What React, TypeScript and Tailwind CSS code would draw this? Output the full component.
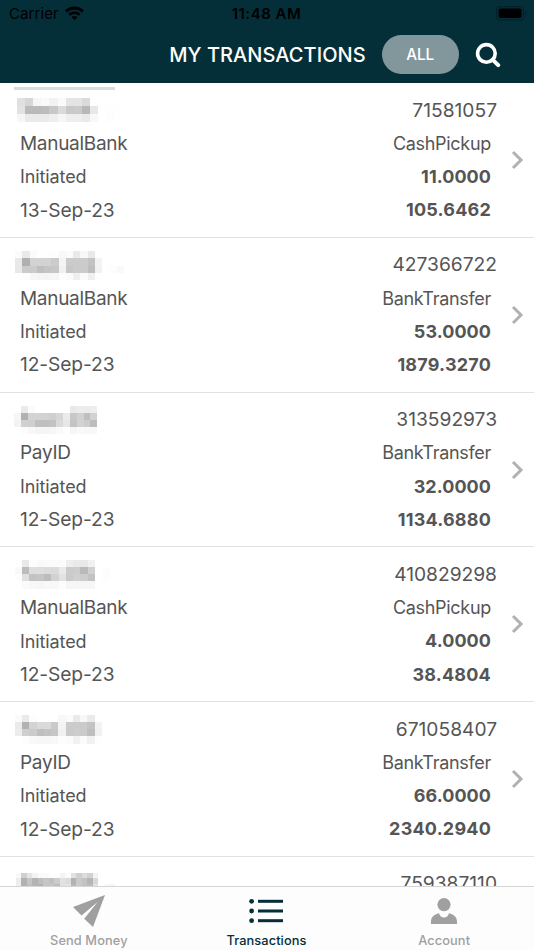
import { useState } from 'react';

interface Transaction {
  id: string;
  method?: string;
  payout?: string;
  status?: string;
  date?: string;
  amount?: string;
  received?: string;
  mask: Mask;
}

interface Mask {
  x: number;
  y: number;
  cell: number;
  rows: string[];
}

// Each pair of hex digits is the grey level of one mosaic cell
const transactions: Transaction[] = [
  {
    id: '71581057',
    method: 'ManualBank',
    payout: 'CashPickup',
    status: 'Initiated',
    date: '13-Sep-23',
    amount: '11.0000',
    received: '105.6462',
    mask: {
      x: 17,
      y: 15,
      cell: 8.1,
      rows: [
        'e0d6f6faf2fae4e4dafeffffff',
        'e2bababcc8dac8cab8e8fffefe',
        'f6eaeaeaeef6eeeeeaf8fffdff',
      ],
    },
  },
  {
    id: '427366722',
    method: 'ManualBank',
    payout: 'BankTransfer',
    status: 'Initiated',
    date: '12-Sep-23',
    amount: '53.0000',
    received: '1879.3270',
    mask: {
      x: 15,
      y: 13,
      cell: 7.25,
      rows: [
        'fbe9fbfffefef8fbe9f8e9feff',
        'e9b0d3d3d3cbf4cbcbcbc3f3ff',
        'e9cbcbbfc4c6f1c6cbcbbef1fffdf9',
        'fefdf7f5f5f6fdfbeffbeffeff',
      ],
    },
  },
  {
    id: '313592973',
    method: 'PayID',
    payout: 'BankTransfer',
    status: 'Initiated',
    date: '12-Sep-23',
    amount: '32.0000',
    received: '1134.6880',
    mask: {
      x: 14,
      y: 13,
      cell: 6.95,
      rows: [
        'ffeafbffffffffffe9ecebee',
        'f6b1d3d3d3cfd6ebc8d1bfd2',
        'f3d0cfbfbfc3dbe7c4d2ccbd',
        'fffcf8f5f5f6faffF6f9f8f8',
      ],
    },
  },
  {
    id: '410829298',
    method: 'ManualBank',
    payout: 'CashPickup',
    status: 'Initiated',
    date: '12-Sep-23',
    amount: '4.0000',
    received: '38.4804',
    mask: {
      x: 14.7,
      y: 12.5,
      cell: 7.3,
      rows: [
        'fee9fdf9fbfbfbeee9e9f1ffff',
        'f9bcdededcdbe9cbcdbad0fffd',
        'fde0c2c5bdd2e2cad0ccc3fffd',
        'fffbf8f6f8f8fdf6f6f6f6ffff',
      ],
    },
  },
  {
    id: '671058407',
    method: 'PayID',
    payout: 'BankTransfer',
    status: 'Initiated',
    date: '12-Sep-23',
    amount: '66.0000',
    received: '2340.2940',
    mask: {
      x: 14.9,
      y: 12.7,
      cell: 7.25,
      rows: [
        'fbeafdfffffff8fbeaf8eafeff',
        'eab2d3dadacbf4cbcbcbc4f3ff',
        'eccfcbbfc3c6f1cacdcbbef1ff',
        'fffdf8f7f7f8fdfbf1fbf1feff',
      ],
    },
  },
  {
    id: '759387110',
    mask: {
      x: 15.5,
      y: 15.5,
      cell: 5.5,
      rows: [
        'f9d0e4f3fafafdfdf3fbe2cfddd2f3ff',
        'edb1c5b3bec6c0cce2dcb2c9c3b5d9ffff',
        'eeb3c0b6b3c6c5bce2e3b6cbc1bbe1fffaf6',
      ],
    },
  },
];

const tabs = [
  { label: 'Send Money', icon: SendIcon },
  { label: 'Transactions', icon: ListIcon },
  { label: 'Account', icon: AccountIcon },
];

function SendIcon() {
  return (
    <svg width="32" height="32" viewBox="0 0 32 32" fill="currentColor">
      <path d="M0 12 L32 0 L20 32 L11.2 23.7 L24.6 7 L8.5 20.5 Z" />
    </svg>
  );
}

function ListIcon() {
  return (
    <svg width="34" height="32" viewBox="0 0 34 32" fill="currentColor">
      {[6.3, 16, 25.7].map((y) => (
        <g key={y}>
          <circle cx="2.6" cy={y} r="2.4" />
          <rect x="9" y={y - 1.5} width="25" height="3" />
        </g>
      ))}
    </svg>
  );
}

function AccountIcon() {
  return (
    <svg width="28" height="32" viewBox="0 0 28 32" fill="currentColor">
      <circle cx="14" cy="9.6" r="6.6" />
      <path d="M1 29 V26.7 C1 22 4 19.4 9 18.2 C9.8 21 11.6 22.6 14 22.6 C16.4 22.6 18.2 21 19 18.2 C24 19.4 27 22 27 26.7 V29 Z" />
    </svg>
  );
}

function MaskedName({ mask }: { mask: Mask }) {
  return (
    <svg className="absolute top-0 left-0" width="130" height="45" viewBox="0 0 130 45" shapeRendering="crispEdges">
      {mask.rows.map((row, r) =>
        (row.match(/../g) ?? []).map((level, c) => (
          <rect
            key={`${r}-${c}`}
            x={mask.x + c * mask.cell}
            y={mask.y + r * mask.cell}
            width={mask.cell}
            height={mask.cell}
            fill={`#${level}${level}${level}`}
          />
        ))
      )}
    </svg>
  );
}

function TransactionRow({ item }: { item: Transaction }) {
  return (
    <li className="relative flex h-[154.75px] shrink-0 items-start border-b border-[#e2e2e2] pt-[10.5px] pl-5 text-[#555]">
      <MaskedName mask={item.mask} />
      {item.method && (
        <div className="flex flex-col pt-[33.4px] leading-[33.4px]">
          <span className="text-[19px] tracking-[-0.3px]">{item.method}</span>
          <span className="text-[18px] tracking-[-0.1px]">{item.status}</span>
          <span className="text-[19.2px] tracking-[-0.1px]">{item.date}</span>
        </div>
      )}
      <div className="ml-auto flex flex-col items-end leading-[33.3px]">
        <span className="-mr-1.5 text-[19.2px]">{item.id}</span>
        {item.payout && (
          <>
            <span className="text-[18px] tracking-[-0.3px]">{item.payout}</span>
            <span className="text-[18px] font-bold tracking-[0.05px]">{item.amount}</span>
            <span className="text-[18px] font-bold tracking-[0.2px]">{item.received}</span>
          </>
        )}
      </div>
      <svg className="mt-[56.5px] mr-2.5 ml-5 shrink-0" width="13" height="20" viewBox="0 0 13 20" fill="none" stroke="#b1b1b1" strokeWidth="3">
        <path d="M2 2 L10 10 L2 18" />
      </svg>
    </li>
  );
}

export default function App() {
  const [activeTab, setActiveTab] = useState('Transactions');

  return (
    <div className="flex h-[950px] w-[534px] flex-col overflow-hidden bg-white font-['Inter','Liberation_Sans',sans-serif]">
      <header className="h-[83px] shrink-0 bg-[#052f38]">
        {/* Status bar */}
        <div className="grid h-7 grid-cols-3 items-center pr-[7px] pl-[9px] text-[15px] text-black">
          <div className="flex items-center gap-1.5">
            <span className="tracking-[0.1px]">Carrier</span>
            <svg className="-mt-0.5" width="19" height="15" viewBox="0 0 20 15" fill="none" stroke="currentColor" strokeWidth="3">
              <path d="M1 5.4 C6 0.5 14 0.5 19 5.4" />
              <path d="M4.4 8.8 C7.5 5.8 12.5 5.8 15.6 8.8" />
              <path d="M10 14.5 L6.8 11.3 C8.6 9.6 11.4 9.6 13.2 11.3 Z" fill="currentColor" stroke="none" />
            </svg>
          </div>
          <span className="pr-[3px] text-center font-semibold tracking-[0.5px]">11:48 AM</span>
          <svg className="-mt-0.5 justify-self-end" width="31" height="15" viewBox="0 0 31 15">
            <rect x="0.6" y="0.6" width="27" height="13.4" rx="4" fill="none" stroke="#03212a" strokeWidth="1.2" />
            <rect x="2.6" y="2.6" width="23" height="9.4" rx="2" fill="#000" />
            <path d="M29.2 5 C31 6 31 8.6 29.2 9.6 Z" fill="#03212a" />
          </svg>
        </div>

        <div className="flex h-[53px] items-center justify-end pr-[33.3px] text-white">
          <h1 className="text-[20px] font-medium tracking-[0.05px]">MY TRANSACTIONS</h1>
          <button type="button" className="ml-4 h-[39px] w-[77px] rounded-full bg-[#82979b] pt-0.5 text-[15.3px] font-medium">
            ALL
          </button>
          <button type="button" className="ml-4" aria-label="Search">
            <svg width="26" height="26" viewBox="0 0 26 26" fill="none" stroke="currentColor" strokeWidth="3.6" strokeLinecap="round">
              <circle cx="11.4" cy="11.4" r="8.8" />
              <path d="M17.8 17.8 L23.2 23.2" strokeWidth="4" />
            </svg>
          </button>
        </div>
      </header>

      <main className="relative min-h-0 flex-1 overflow-hidden">
        <ul className="flex flex-col">
          {transactions.map((item) => (
            <TransactionRow key={item.id} item={item} />
          ))}
        </ul>
        <div className="absolute top-1 left-[14px] h-[3px] w-[101px] bg-[#d8dcdf]" />
      </main>

      <nav className="grid h-16 shrink-0 grid-cols-3 border-t border-[#d6d6d6] bg-[#fdfdfd] pr-px">
        {tabs.map(({ label, icon: Icon }) => (
          <button
            key={label}
            type="button"
            onClick={() => setActiveTab(label)}
            className={`flex flex-col items-center pt-2 text-[12.8px] leading-4 font-medium tracking-[0.1px] ${
              activeTab === label ? 'text-[#052f38]' : 'text-[#a0a0a0]'
            }`}
          >
            <Icon />
            <span className="mt-1.5">{label}</span>
          </button>
        ))}
      </nav>
    </div>
  );
}
